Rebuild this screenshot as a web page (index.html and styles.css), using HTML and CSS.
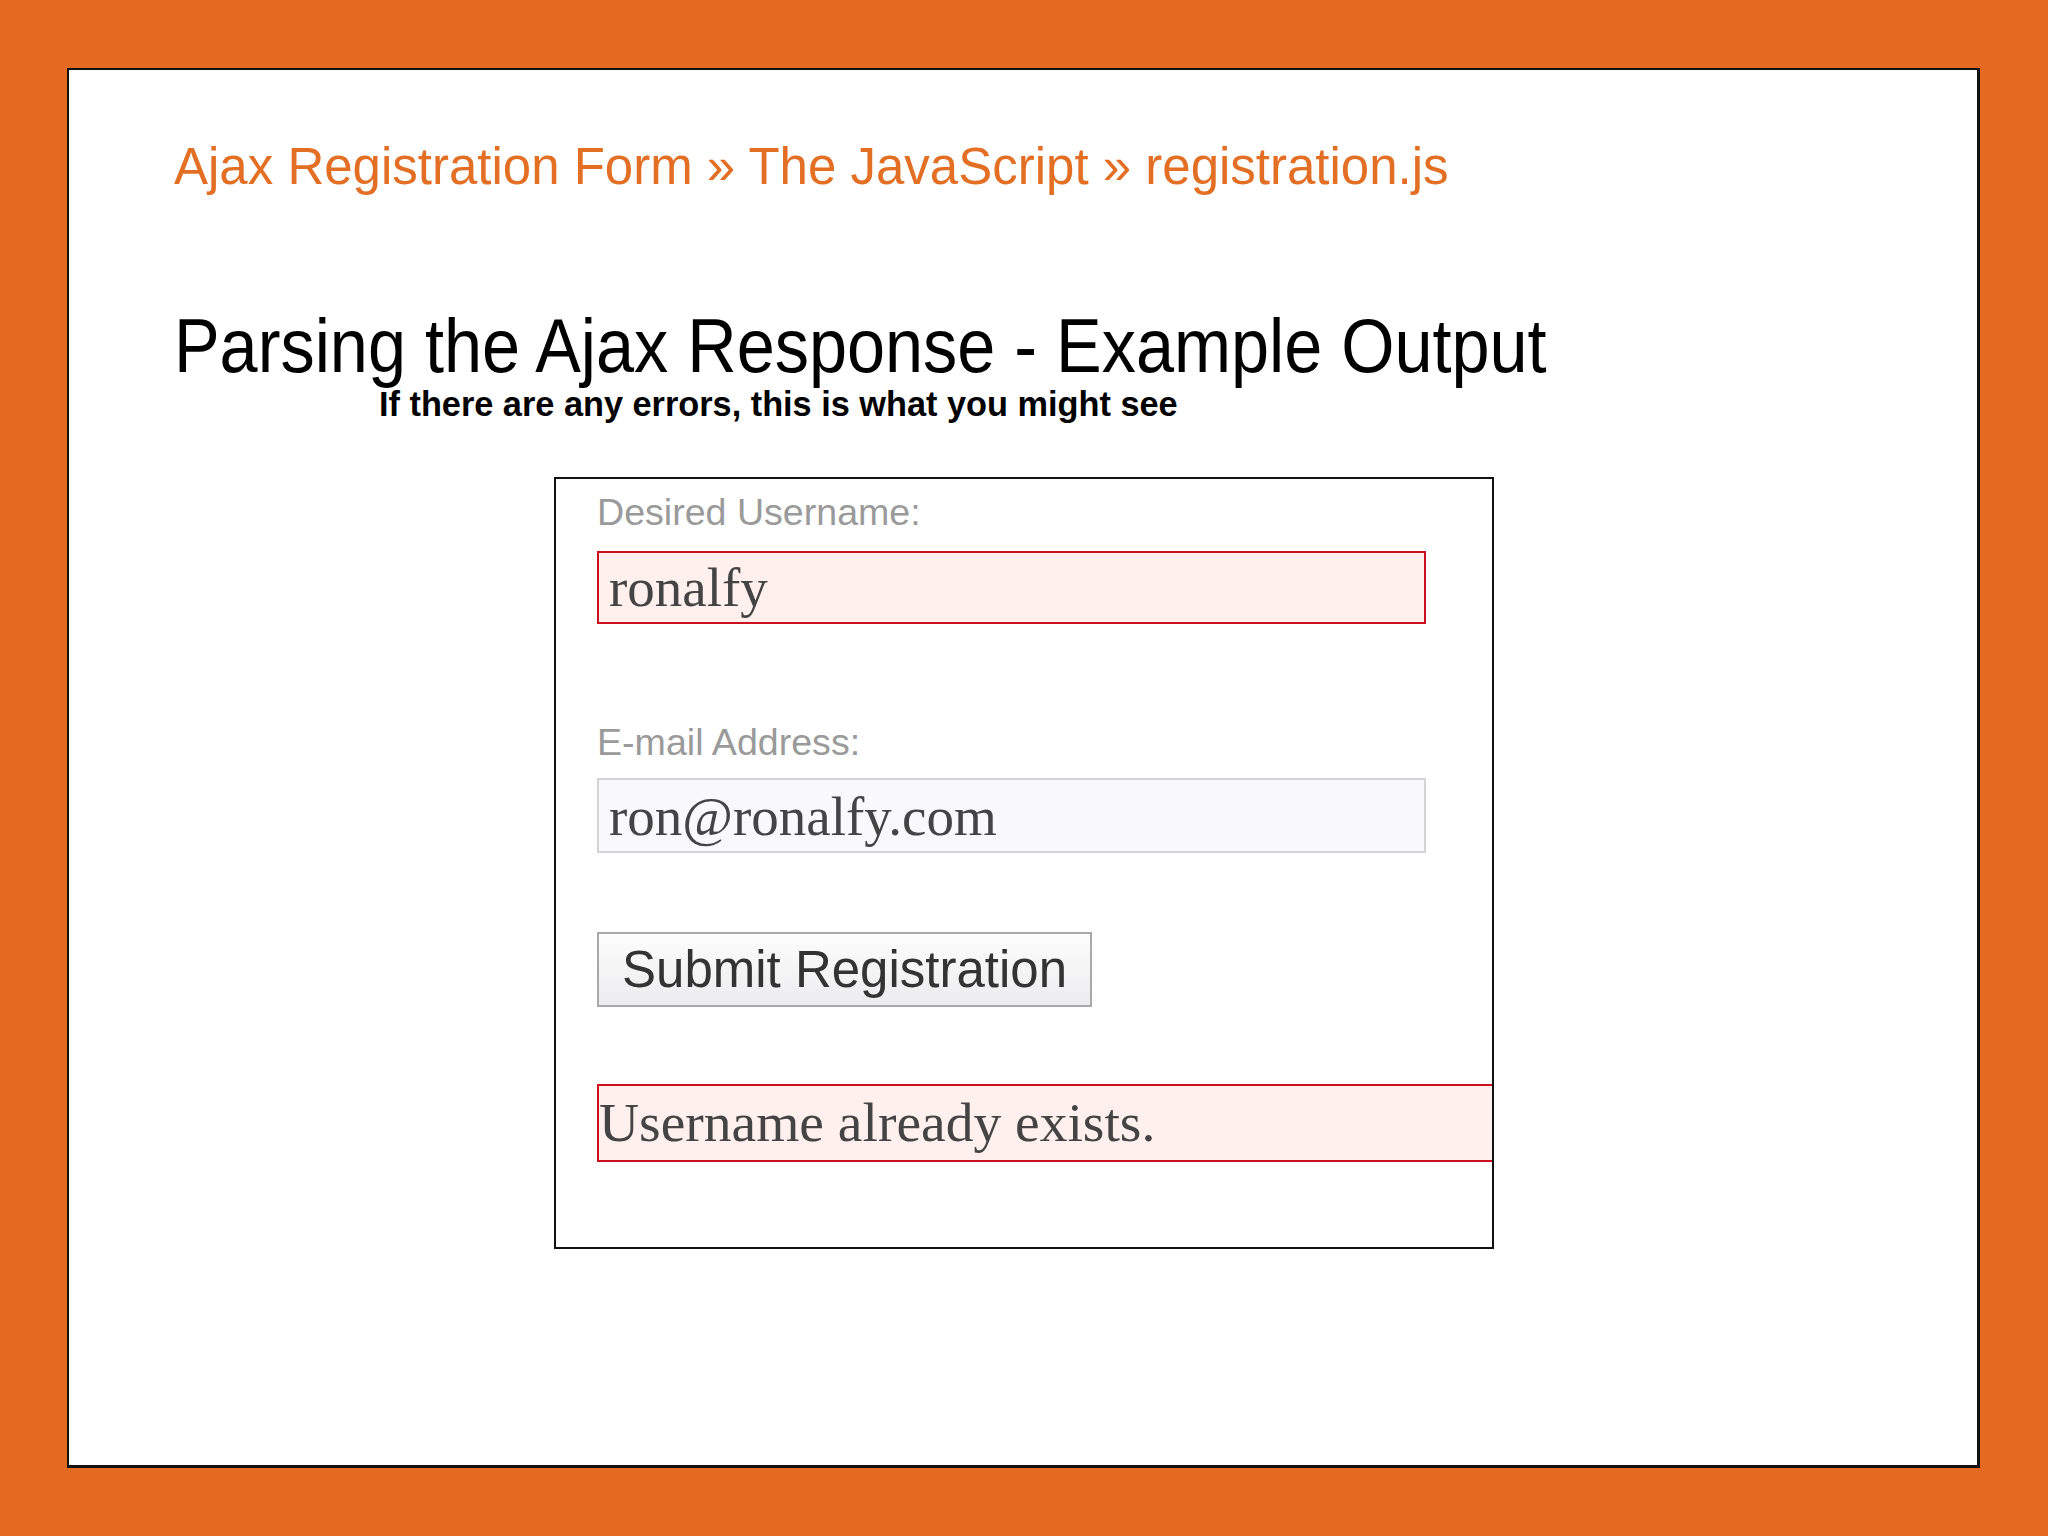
FILE: index.html
```html
<!DOCTYPE html>
<html>
<head>
<meta charset="utf-8">
<link rel="stylesheet" href="styles.css">
</head>
<body>
<div class="slide">
  <div class="crumb">Ajax Registration Form » The JavaScript » registration.js</div>
  <h1 class="title">Parsing the Ajax Response - Example Output</h1>
  <div class="subtitle">If there are any errors, this is what you might see</div>
  <div class="shot">
    <div class="label">Desired Username:</div>
    <div class="field field-error">ronalfy</div>
    <div class="label label-email">E-mail Address:</div>
    <div class="field field-ok">ron@ronalfy.com</div>
    <div class="button">Submit Registration</div>
    <div class="message">Username already exists.</div>
  </div>
</div>
</body>
</html>
```
FILE: styles.css
```css
html, body {
  margin: 0;
  padding: 0;
}
body {
  background: #e46a22;
  width: 2048px;
  height: 1536px;
  overflow: hidden;
  font-family: "Liberation Sans", Arial, sans-serif;
}
.slide {
  box-sizing: border-box;
  margin: 68px 0 0 67px;
  width: 1913px;
  height: 1400px;
  background: #fff;
  border: 2px solid #111;
  border-right-width: 3px;
  border-bottom-width: 3px;
  padding: 71px 0 0 105px;
}
.crumb {
  font-size: 51px;
  line-height: 1;
  color: #e36f25;
  white-space: nowrap;
}
.title {
  margin: 116px 0 0 0;
  font-weight: normal;
  font-size: 76px;
  line-height: 1;
  color: #000;
  white-space: nowrap;
  transform: scaleX(0.9);
  transform-origin: left center;
}
.subtitle {
  margin: 3px 0 0 205px;
  font-weight: bold;
  font-size: 34.3px;
  line-height: 1;
  color: #000;
  white-space: nowrap;
}
.shot {
  box-sizing: border-box;
  margin: 56px 0 0 380px;
  width: 940px;
  height: 772px;
  border: 2px solid #111;
  padding: 15px 0 0 41px;
  overflow: hidden;
  display: flex;
  flex-direction: column;
  align-items: flex-start;
}
.label {
  font-size: 37.6px;
  line-height: 1;
  color: #9a9a9a;
}
.label-email {
  margin-top: 100px;
}
.field {
  box-sizing: border-box;
  width: 829px;
  margin-top: 19px;
  padding-left: 10px;
  font-family: "Liberation Serif", "Times New Roman", serif;
  font-size: 55px;
  color: #444;
  white-space: nowrap;
}
.field-error {
  height: 73px;
  line-height: 69px;
  border: 2px solid #cc1020;
  background: #fff0ee;
}
.field-ok {
  margin-top: 17px;
  height: 75px;
  line-height: 73px;
  border: 2px solid #d4d3d8;
  background: #f9f8fb;
}
.button {
  box-sizing: border-box;
  margin-top: 79px;
  width: 495px;
  height: 75px;
  border: 2px solid #a9a9a9;
  background: linear-gradient(#fdfdfd, #ececee);
  font-size: 51px;
  line-height: 71px;
  color: #333;
  padding-left: 23px;
  white-space: nowrap;
}
.message {
  box-sizing: border-box;
  margin-top: 77px;
  width: 960px;
  height: 78px;
  border: 2px solid #cc1020;
  background: #fff0ee;
  padding-left: 0;
  font-family: "Liberation Serif", "Times New Roman", serif;
  font-size: 55.5px;
  line-height: 74px;
  color: #444;
  white-space: nowrap;
  flex-shrink: 0;
}
```
